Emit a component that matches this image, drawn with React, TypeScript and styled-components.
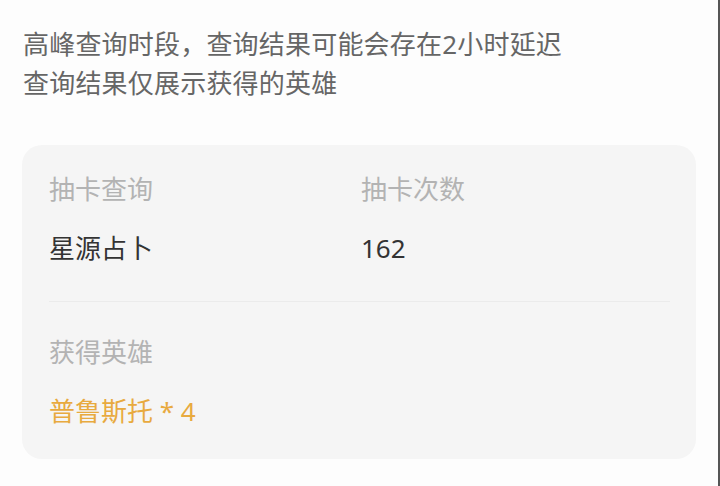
import React from "react";
import styled, { createGlobalStyle } from "styled-components";

const GlobalStyle = createGlobalStyle`
  html, body {
    margin: 0;
    padding: 0;
    background: #fdfdfd;
  }
  body {
    font-family: "Noto Sans", "Noto Sans CJK SC", sans-serif;
  }
`;

const Page = styled.div`
  width: 720px;
  height: 486px;
  box-sizing: border-box;
  padding: 25px 22px 0 22px;
  background: #fdfdfd;
  border-right: 2px solid #555;
  overflow: hidden;
`;

const Notice = styled.div`
  padding-left: 1px;
  font-size: 26px;
  line-height: 39px;
  letter-spacing: 0.2px;
  color: #666666;
`;

const Card = styled.div`
  margin-top: 42px;
  background: #f5f5f5;
  border-radius: 20px;
  padding: 25px 26px 28px 27px;
`;

const Section = styled.div<{ $divided?: boolean }>`
  padding-bottom: ${(p) => (p.$divided ? "33px" : "0")};
  margin-bottom: ${(p) => (p.$divided ? "31px" : "0")};
  border-bottom: ${(p) => (p.$divided ? "1px solid #ebebeb" : "none")};
`;

const Grid = styled.div`
  display: grid;
  grid-template-columns: 312px 1fr;
`;

const Field = styled.div`
  display: flex;
  flex-direction: column;
  gap: 20px;
`;

const Label = styled.div`
  font-size: 26px;
  line-height: 39px;
  color: #b3b3b3;
`;

const Value = styled.div<{ $accent?: boolean }>`
  font-size: 26px;
  line-height: 39px;
  color: ${(p) => (p.$accent ? "#e8aa3f" : "#333333")};
`;

export default function App() {
  return (
    <>
      <GlobalStyle />
      <Page>
        <Notice>
          高峰查询时段，查询结果可能会存在2小时延迟
          <br />
          查询结果仅展示获得的英雄
        </Notice>
        <Card>
          <Section $divided>
            <Grid>
              <Field>
                <Label>抽卡查询</Label>
                <Value>星源占卜</Value>
              </Field>
              <Field>
                <Label>抽卡次数</Label>
                <Value>162</Value>
              </Field>
            </Grid>
          </Section>
          <Section>
            <Field>
              <Label>获得英雄</Label>
              <Value $accent>普鲁斯托 * 4</Value>
            </Field>
          </Section>
        </Card>
      </Page>
    </>
  );
}
